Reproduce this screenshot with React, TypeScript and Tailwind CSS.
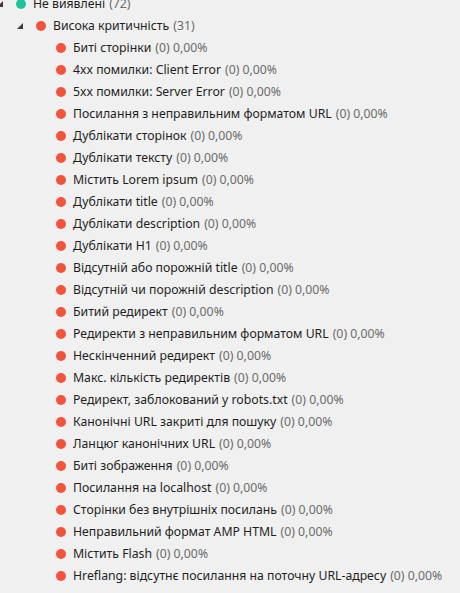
import React from 'react';

type Node = {
  label: string;
  count: number;
  pct?: string;
  color: 'green' | 'red';
  expanded?: boolean;
  children?: Node[];
};

const leaf = (label: string): Node => ({ label, count: 0, pct: '0,00%', color: 'red' });

const tree: Node = {
  label: 'Не виявлені',
  count: 72,
  color: 'green',
  expanded: true,
  children: [
    {
      label: 'Висока критичність',
      count: 31,
      color: 'red',
      expanded: true,
      children: [
        leaf('Биті сторінки'),
        leaf('4xx помилки: Client Error'),
        leaf('5xx помилки: Server Error'),
        leaf('Посилання з неправильним форматом URL'),
        leaf('Дублікати сторінок'),
        leaf('Дублікати тексту'),
        leaf('Містить Lorem ipsum'),
        leaf('Дублікати title'),
        leaf('Дублікати description'),
        leaf('Дублікати H1'),
        leaf('Відсутній або порожній title'),
        leaf('Відсутній чи порожній description'),
        leaf('Битий редирект'),
        leaf('Редиректи з неправильним форматом URL'),
        leaf('Нескінченний редирект'),
        leaf('Макс. кількість редиректів'),
        leaf('Редирект, заблокований у robots.txt'),
        leaf('Канонічні URL закриті для пошуку'),
        leaf('Ланцюг канонічних URL'),
        leaf('Биті зображення'),
        leaf('Посилання на localhost'),
        leaf('Сторінки без внутрішніх посилань'),
        leaf('Неправильний формат AMP HTML'),
        leaf('Містить Flash'),
        leaf('Hreflang: відсутнє посилання на поточну URL-адресу'),
      ],
    },
  ],
};

const indent = ['pl-0', 'pl-5', 'pl-10'];

function Arrow() {
  return (
    <svg width="6" height="6" viewBox="0 0 6 6" className="block">
      <polygon points="6,0 6,6 0,6" fill="#3c3c3c" />
    </svg>
  );
}

function TreeRow({ node, level }: { node: Node; level: number }) {
  return (
    <>
      <div className={`flex h-[22px] items-center whitespace-nowrap ${indent[level]}`}>
        <span className="flex w-[19px] shrink-0 items-center">
          {node.children && node.expanded ? <Arrow /> : null}
        </span>
        <span
          className={`h-[10px] w-[10px] shrink-0 rounded-full ${
            node.color === 'green' ? 'bg-[#1dc49b]' : 'bg-[#f2533a]'
          }`}
        />
        <span className="ml-[7px] text-[#1e1e1e]">{node.label}</span>
        <span className="ml-[4px] text-[#6b6b6b]">
          ({node.count}){node.pct ? ` ${node.pct}` : ''}
        </span>
      </div>
      {node.expanded &&
        node.children?.map((c) => <TreeRow key={c.label} node={c} level={level + 1} />)}
    </>
  );
}

export default function App() {
  return (
    <div className="h-[593px] w-[460px] overflow-hidden bg-[#f0f0f0] font-['Noto_Sans',sans-serif] text-[12.25px]">
      <div className="-ml-[3px] -mt-[7px]">
        <TreeRow node={tree} level={0} />
      </div>
    </div>
  );
}
